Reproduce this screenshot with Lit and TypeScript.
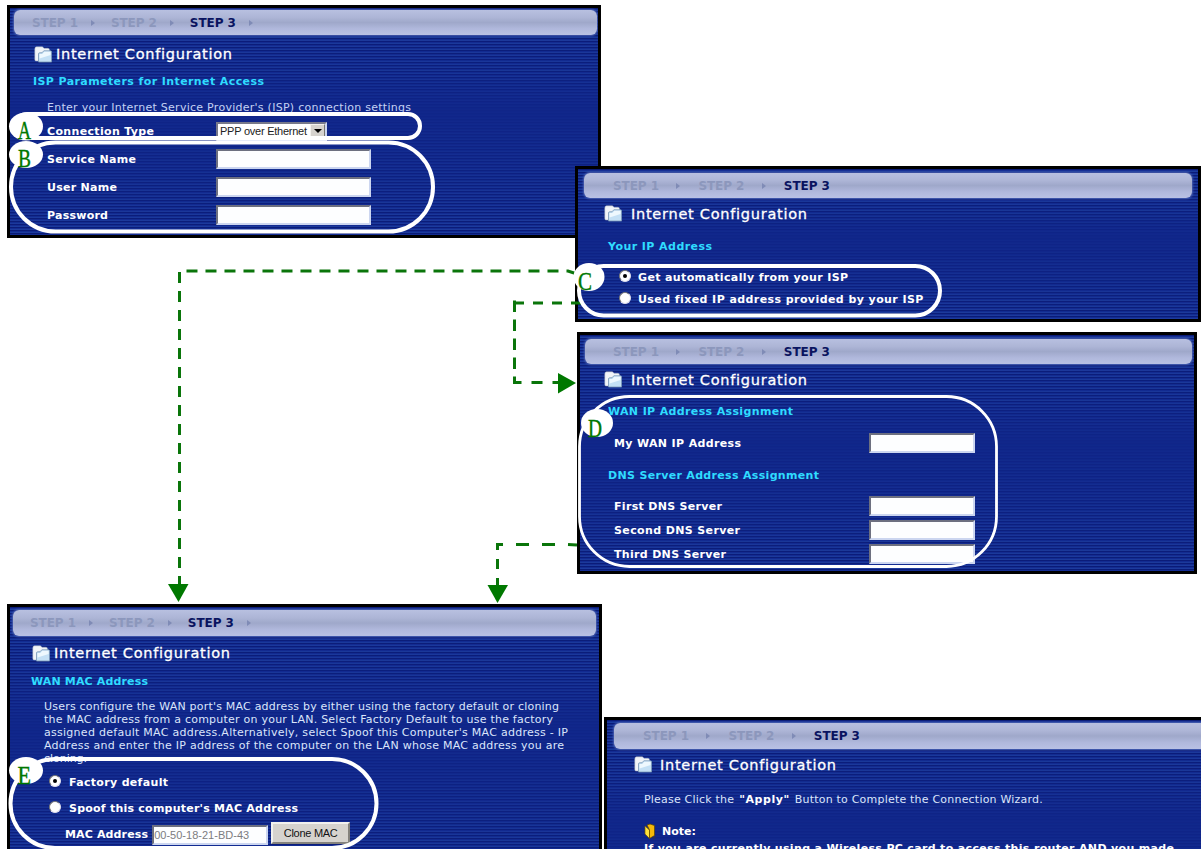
import { LitElement, css, html, nothing, svg } from 'lit';
import { customElement, property, query } from 'lit/decorators.js';
import { classMap } from 'lit/directives/class-map.js';

// A run of text that spreads its letters over a given width
@customElement('fit-text')
export class FitText extends LitElement {
    static override styles = css`
        :host {
            display: block;
            flex: none;
            white-space: nowrap;
        }

        span {
            display: inline-block;
        }
    `

    @property({type: Number})
    width: number = 0;

    @property()
    text: string = '';

    @query('span')
    span!: HTMLSpanElement;

    override updated() {
        this.span.style.letterSpacing = '0px';
        const natural = this.span.getBoundingClientRect().width;
        this.span.style.letterSpacing = `${(this.width - natural) / (this.text.length - 1)}px`;
    }

    override render() {
        return html`<span>${this.text}</span>`
    }
}

const fit = (text: string, width: number) => html`<fit-text .text=${text} .width=${width}></fit-text>`;

@customElement('wizard-panel')
export class WizardPanel extends LitElement {
    static override styles = css`
        :host {
            display: block;
            box-sizing: border-box;
            border: 3px solid #000;
            overflow: hidden;
            position: relative;
            background: #10268a;
            color: #e8f0ff;
            font-family: "DejaVu Sans", Verdana, sans-serif;
            font-size: 11px;
        }

        .lines {
            position: absolute;
            inset: 0;
            background: repeating-linear-gradient(to bottom, #0a1a74 0 1px, #142e94 1px 2px, #2040a0 2px 3px);
            -webkit-mask-image: linear-gradient(to bottom, rgba(0, 0, 0, .9), rgba(0, 0, 0, .6) 28%, rgba(0, 0, 0, .05) 45%, rgba(0, 0, 0, .3) 65%, rgba(0, 0, 0, .85));
            mask-image: linear-gradient(to bottom, rgba(0, 0, 0, .9), rgba(0, 0, 0, .6) 28%, rgba(0, 0, 0, .05) 45%, rgba(0, 0, 0, .3) 65%, rgba(0, 0, 0, .85));
        }

        .body {
            position: relative;
            display: flex;
            flex-direction: column;
        }

        .bar {
            box-sizing: border-box;
            height: 25px;
            flex: none;
            display: flex;
            align-items: center;
            border-radius: 6px;
            background: linear-gradient(to bottom, #b8c0e0, #adb5d6 30%, #9fa8ca 50%, #b0b8dc 75%, #b9c1e4);
            box-shadow: 0 0 2px 1px #4a60b0;
            font-size: 12px;
            font-weight: bold;
            color: #8c97bc;
        }

        .step {
            display: flex;
            align-items: center;
        }

        .current {
            color: #0a1460;
        }

        .tri {
            width: 0;
            height: 0;
            border: 3px solid transparent;
            border-left: 4px solid #7f8bb6;
            border-right: 0;
        }

        .title {
            display: flex;
            align-items: center;
            font-size: 14.5px;
            color: #fff;
            -webkit-text-stroke: .3px #fff;
        }

        .title svg {
            flex: none;
        }
    `

    @property({type: Boolean})
    trailing: boolean = false;

    override render() {
        const steps = ['STEP 1', 'STEP 2', 'STEP 3'];
        return html`
        <div class="lines"></div>
        <div class="body">
            <div class="bar" part="bar">
                ${steps.map((s, i) => html`
                    <div class=${classMap({step: true, current: i === 2})}>${fit(s, 46)}</div>
                    ${i < 2 || this.trailing ? html`<i part="tri" class="tri"></i>` : nothing}
                `)}
            </div>
            <div class="title" part="title">
                <svg width="18" height="17" viewBox="0 0 18 17">
                    <path d="M.8 3Q.8 .8 2.500 .8H8.500L10 2.300H14Q15.500 2.300 15.500 4V15H2Q.8 15 .8 13.500Z" fill="#f1f4f8" stroke="#9aa6b8" stroke-width=".5"/>
                    <path d="M4.500 16V8Q4.500 6.800 5.700 6.800H8L9.800 4.800H16.500Q17.600 4.800 17.600 6V16Z" fill="#c4e0f5" stroke="#7795b4" stroke-width=".8"/>
                    <path d="M5.500 8H8.500L10.300 5.800H16.600V9L5.500 12.500Z" fill="#eef8fe"/>
                </svg>
                ${fit('Internet Configuration', 176)}
            </div>
            <slot></slot>
        </div>
        `
    }
}

interface Callout {
    letter: string;
    box: [number, number, number, number, number, number]; // x, y, w, h, radius, stroke
    disc: [number, number, number, number]; // cx, cy, rx, ry
    text: [number, number, number]; // x, baseline, width
}

const callouts: Callout[] = [
    {letter: 'A', box: [15, 114, 405, 24, 12, 4], disc: [26, 126.5, 17, 14], text: [18, 139, 13]},
    {letter: 'B', box: [11, 142.5, 422, 89, 44.5, 4], disc: [26, 154.5, 17, 13.5], text: [18, 167, 13]},
    {letter: 'C', box: [579, 266, 361, 49.5, 24.7, 4], disc: [589, 277, 15.5, 14], text: [578, 290, 14]},
    {letter: 'D', box: [579.5, 396.5, 417, 170, 50, 2.8], disc: [597, 423, 16, 14], text: [588, 437, 14]},
    {letter: 'E', box: [10.5, 759, 366, 89, 44.5, 4], disc: [26, 770.5, 17, 13.5], text: [17.5, 784, 13.5]},
];

@customElement('app-root')
export class AppRoot extends LitElement {
    static override styles = css`
        :host {
            display: block;
            position: relative;
            width: 1201px;
            height: 849px;
            overflow: hidden;
            background: #fff;
        }

        wizard-panel {
            position: absolute;
        }

        .isp { left: 7px; top: 5px; width: 594px; height: 233px; }
        .ip { left: 575px; top: 166px; width: 626px; height: 156px; }
        .dns { left: 577px; top: 332px; width: 620px; height: 242px; }
        .mac { left: 7px; top: 604px; width: 595px; height: 270px; }
        .done { left: 604px; top: 717px; width: 640px; height: 230px; }

        wizard-panel::part(tri) { margin: 0 16px 0 13px; }
        .isp::part(bar) { margin: 2px 1px 0 4px; padding-left: 18px; }
        .ip::part(bar) { margin: 4px 6px 0 6px; padding-left: 29px; }
        .dns::part(bar) { margin: 4px 2px 0 5px; padding-left: 28px; }
        .mac::part(bar) { margin: 3px 3px 0 3px; padding-left: 17px; height: 26px; }
        .done::part(bar) { margin: 3px 0 0 7px; padding-left: 29px; height: 26px; }
        .ip::part(tri), .dns::part(tri), .done::part(tri) { margin: 0 18px 0 17.5px; }

        .isp::part(title) { height: 38px; padding-left: 24px; gap: 4px; }
        .ip::part(title) { height: 31px; padding-left: 26px; gap: 9px; }
        .dns::part(title) { height: 31px; padding-left: 24px; gap: 9px; }
        .mac::part(title) { height: 34px; padding-left: 22px; gap: 4px; }
        .done::part(title) { height: 31px; padding-left: 27px; gap: 8px; }

        .row {
            display: flex;
            align-items: center;
            flex: none;
        }

        .head {
            font-weight: bold;
            color: #2fdcff;
        }

        .label {
            font-weight: bold;
            color: #fff;
        }

        .isp .head { height: 17px; padding-left: 23px; }
        .isp .intro { height: 20px; padding: 7px 0 0 37px; color: #c4d2f4; }
        .isp .label { height: 28px; padding-left: 37px; }
        .isp .label > fit-text { margin-right: auto; }
        .isp .label .field { width: 155px; margin-right: 227px; }
        .isp .label .select { margin-right: 271px; }

        .choices { margin-top: -1px; }
        .choices fit-text { padding-top: 3px; }

        .ip .head { height: 34px; padding-left: 30px; }
        .ip .choices { padding-top: 3px; }
        .ip .label { height: 22px; padding-left: 41px; gap: 7px; }

        .dns .head { height: 32px; padding-left: 28px; }
        .dns .label { height: 32px; padding-left: 34px; }
        .dns .servers { padding-top: 3px; }
        .dns .servers .label { height: 24px; }
        .dns .label fit-text { margin-right: auto; }
        .dns .field { width: 106px; margin-right: 219px; }

        .mac .head { height: 22px; padding-left: 21px; }
        .mac .para { padding: 8px 0 4px 34px; line-height: 13px; color: #dbe5fb; }
        .mac .label { height: 26px; padding-left: 39px; gap: 8px; }
        .mac .address { height: 29px; padding-left: 55px; gap: 4px; }
        .mac .field { width: 116px; }

        .done .text { height: 38px; padding-left: 37px; gap: 5px; color: #dbe5fb; }
        .done .text b { color: #fff; }
        .done .note { height: 20px; padding: 3px 0 0 37px; gap: 5px; }
        .done .last { height: 14px; padding-left: 37px; }

        .field {
            box-sizing: border-box;
            height: 20px;
            display: flex;
            align-items: center;
            background: #fdfeff;
            border: 2px solid;
            border-color: #6d7080 #ccd6f0 #ccd6f0 #6d7080;
            font: 11px "Liberation Sans", Arial, sans-serif;
            color: #7c7c80;
        }

        .select {
            box-sizing: border-box;
            width: 111px;
            height: 19px;
            display: flex;
            align-items: center;
            justify-content: space-between;
            padding-left: 2px;
            background: #fff;
            border: 2px solid;
            border-color: #77798a #ccd6f0 #ccd6f0 #77798a;
            font: 11px "Liberation Sans", Arial, sans-serif;
            color: #222;
        }

        .drop {
            box-sizing: border-box;
            width: 15px;
            height: 15px;
            display: flex;
            align-items: center;
            justify-content: center;
            background: #d6d3ce;
            border: 1px solid;
            border-color: #f4f2ee #77756f #77756f #f4f2ee;
        }

        .drop::after {
            content: "";
            border: 4px solid transparent;
            border-top-color: #000;
            border-bottom: 0;
        }

        .clone {
            box-sizing: border-box;
            width: 79px;
            height: 22px;
            margin: -4px 0 0 -1px;
            display: flex;
            align-items: center;
            justify-content: center;
            background: #d6d3ce;
            border: 2px solid;
            border-color: #f2f1ee #84827c #84827c #f2f1ee;
            font: 11px "Liberation Sans", Arial, sans-serif;
            color: #111;
        }

        .radio {
            box-sizing: border-box;
            width: 12px;
            height: 12px;
            flex: none;
            display: flex;
            align-items: center;
            justify-content: center;
            border-radius: 50%;
            background: #fff;
            border: 1px solid;
            border-color: #777 #dde #dde #777;
        }

        .radio.on::after {
            content: "";
            width: 4px;
            height: 4px;
            border-radius: 50%;
            background: #000;
        }

        .overlay {
            position: absolute;
            inset: 0;
        }

        .wire {
            fill: none;
            stroke: #0a750a;
            stroke-width: 3px;
        }

        .tip {
            fill: #007800;
        }

        .ring {
            fill: none;
            stroke: #fff;
        }

        .disc {
            fill: #fff;
        }

        .letter {
            font: 25px "Liberation Serif", "Times New Roman", serif;
            fill: #007800;
            stroke: #007800;
            stroke-width: .4px;
        }
    `

    renderField(label: string, width: number) {
        return html`<div class="row label">${fit(label, width)}<div class="field"></div></div>`
    }

    renderRadio(label: string, width: number, on: boolean) {
        return html`<div class="row label"><i class=${classMap({radio: true, on})}></i>${fit(label, width)}</div>`
    }

    renderCallout({letter, box, disc, text}: Callout) {
        return svg`
            <rect class="ring" x=${box[0]} y=${box[1]} width=${box[2]} height=${box[3]} rx=${box[4]} stroke-width=${box[5]}></rect>
            <ellipse class="disc" cx=${disc[0]} cy=${disc[1]} rx=${disc[2]} ry=${disc[3]}></ellipse>
            <text class="letter" x=${text[0]} y=${text[1]} textLength=${text[2]} lengthAdjust="spacingAndGlyphs">${letter}</text>
        `
    }

    override render() {
        return html`
        <wizard-panel class="isp" trailing>
            <div class="row head">${fit('ISP Parameters for Internet Access', 231)}</div>
            <div class="row intro">${fit("Enter your Internet Service Provider's (ISP) connection settings", 364)}</div>
            <div class="row label">
                ${fit('Connection Type', 107)}
                <div class="select">${fit('PPP over Ethernet', 87)}<i class="drop"></i></div>
            </div>
            ${this.renderField('Service Name', 89)}
            ${this.renderField('User Name', 70)}
            ${this.renderField('Password', 61)}
        </wizard-panel>

        <wizard-panel class="ip">
            <div class="row head">${fit('Your IP Address', 104)}</div>
            <div class="choices">
                ${this.renderRadio('Get automatically from your ISP', 210, true)}
                ${this.renderRadio('Used fixed IP address provided by your ISP', 285, false)}
            </div>
        </wizard-panel>

        <wizard-panel class="dns">
            <div class="row head">${fit('WAN IP Address Assignment', 185)}</div>
            ${this.renderField('My WAN IP Address', 127)}
            <div class="row head">${fit('DNS Server Address Assignment', 211)}</div>
            <div class="servers">
                ${this.renderField('First DNS Server', 108)}
                ${this.renderField('Second DNS Server', 126)}
                ${this.renderField('Third DNS Server', 112)}
            </div>
        </wizard-panel>

        <wizard-panel class="mac" trailing>
            <div class="row head">${fit('WAN MAC Address', 117)}</div>
            <div class="para">
                ${fit("Users configure the WAN port's MAC address by either using the factory default or cloning", 515)}
                ${fit('the MAC address from a computer on your LAN. Select Factory Default to use the factory', 509)}
                ${fit("assigned default MAC address.Alternatively, select Spoof this Computer's MAC address - IP", 524)}
                ${fit('Address and enter the IP address of the computer on the LAN whose MAC address you are', 520)}
                ${fit('cloning.', 43)}
            </div>
            <div class="choices">
                ${this.renderRadio('Factory default', 99, true)}
                ${this.renderRadio("Spoof this computer's MAC Address", 229, false)}
            </div>
            <div class="row label address">
                ${fit('MAC Address', 83)}
                <div class="field">${fit('00-50-18-21-BD-43', 95)}</div>
                <div class="clone">${fit('Clone MAC', 54)}</div>
            </div>
        </wizard-panel>

        <wizard-panel class="done">
            <div class="row text">
                ${fit('Please Click the', 90)}
                <b>${fit('"Apply"', 50)}</b>
                ${fit('Button to Complete the Connection Wizard.', 248)}
            </div>
            <div class="row label note">
                <svg width="13" height="17" viewBox="0 0 13 17">
                    <path d="M1 3L5.500 7V15.500L1 11Z" fill="#ffe23c" stroke="#7a5a00" stroke-width=".7"/>
                    <path d="M3 2L6 1 10.500 2.500V12.500L5.500 15.500V7Z" fill="#f4b90a" stroke="#5a4200" stroke-width=".7"/>
                    <path d="M8.500 15L11.500 13V15L9 16.500Z" fill="#26305a"/>
                </svg>
                ${fit('Note:', 34)}
            </div>
            <div class="row label last">${fit('If you are currently using a Wireless PC card to access this router AND you made', 530)}</div>
        </wizard-panel>

        <svg class="overlay" width="1201" height="849">
            <path class="wire" stroke-dasharray="11 8" d="M577 274L568 271H179.500V590"/>
            <path class="wire" stroke-dasharray="10 9" d="M581 303H513"/>
            <path class="wire" stroke-dasharray="11.500 7.500" d="M514.500 300.500V384"/>
            <path class="wire" stroke-dasharray="11 10" stroke-dashoffset="2.500" d="M513 382.500H560"/>
            <path class="wire" stroke-dasharray="13 13" stroke-dashoffset="4" d="M577 545L568 544.500H496"/>
            <path class="wire" stroke-dasharray="10 9" stroke-dashoffset="3" d="M497.500 543V590"/>
            <path class="tip" d="M168 584H188.500L178.500 602Z"/>
            <path class="tip" d="M558 373V393.500L576 383Z"/>
            <path class="tip" d="M487.500 585H508L497.500 603Z"/>
            ${callouts.map(c => this.renderCallout(c))}
        </svg>
        `
    }
}
